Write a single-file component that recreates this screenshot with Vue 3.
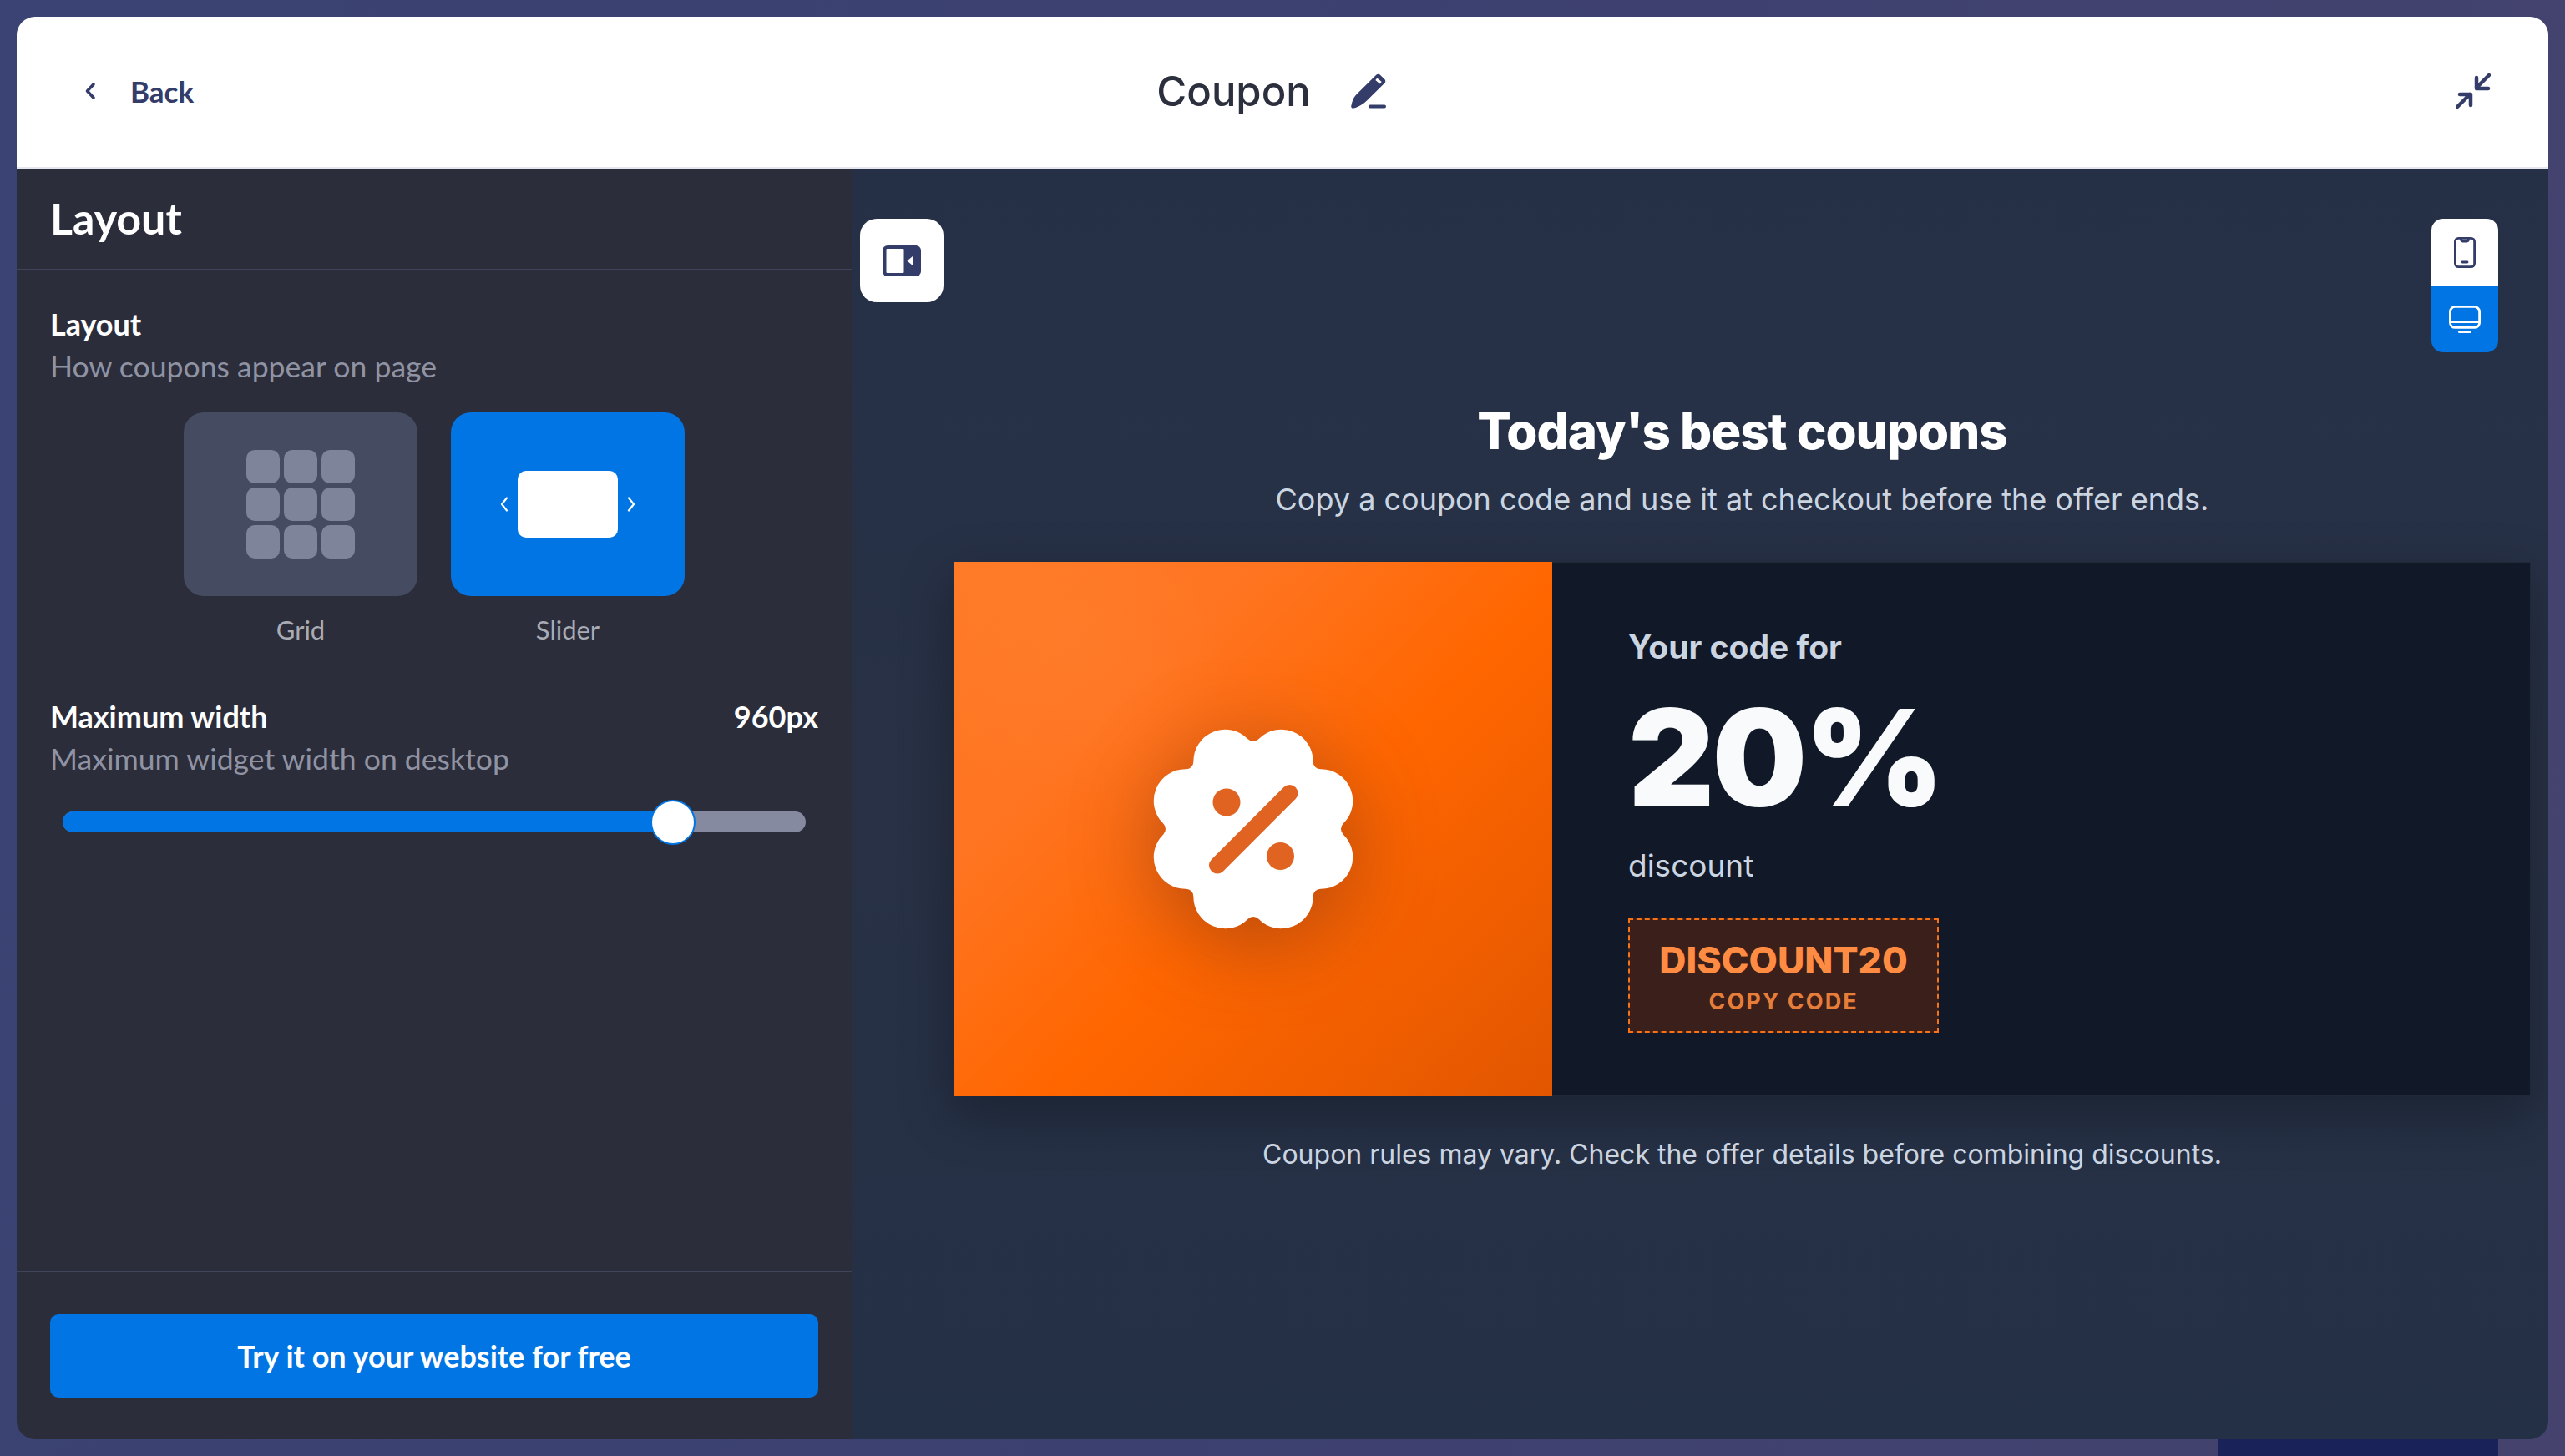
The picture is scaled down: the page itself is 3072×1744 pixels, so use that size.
<script setup>
const cells = Array.from({ length: 9 }, (_, i) => i)

const badgePath = (() => {
  const c = 120, lobeDist = 88, lobeR = 38, notch = 105, filletR = 8.9
  const pt = (r, deg) => {
    const a = (deg * Math.PI) / 180
    return [c + r * Math.cos(a), c + r * Math.sin(a)]
  }
  const f = (n) => n.toFixed(2)
  const t = lobeR / (lobeR + filletR)
  const toward = (lobe, fil) => [lobe[0] + (fil[0] - lobe[0]) * t, lobe[1] + (fil[1] - lobe[1]) * t]
  let d = ''
  for (let k = 0; k < 8; k++) {
    const lobe = pt(lobeDist, 45 * k + 22.5)
    const a = toward(lobe, pt(notch + filletR, 45 * k))
    const b = toward(lobe, pt(notch + filletR, 45 * (k + 1)))
    d += k === 0 ? `M${f(a[0])} ${f(a[1])}` : `A${filletR} ${filletR} 0 0 0 ${f(a[0])} ${f(a[1])}`
    d += `A${lobeR} ${lobeR} 0 0 1 ${f(b[0])} ${f(b[1])}`
  }
  const first = toward(pt(lobeDist, 22.5), pt(notch + filletR, 0))
  d += `A${filletR} ${filletR} 0 0 0 ${f(first[0])} ${f(first[1])}Z`
  return d
})()
</script>

<template>
  <div class="page">
    <div class="strip"></div>
    <div class="frame">
      <header class="topbar">
        <div class="back">
          <svg class="chev" viewBox="0 0 14 22" width="14" height="22">
            <path d="M11 3 3.500 11 11 19" fill="none" stroke="currentColor" stroke-width="3.600" stroke-linecap="round" stroke-linejoin="round" />
          </svg>
          <span>Back</span>
        </div>
        <div class="title-wrap">
          <span class="title">Coupon</span>
          <svg class="pencil" viewBox="0 0 42 42" width="42" height="42">
            <path d="M30.500 1.600c1.300-1.200 3-1.200 4.200 0l5.600 5.400c1.300 1.200 1.300 3.100 0 4.400L19 32.600c-3.700 3.600-9 7-13.500 8.400L3 41.600c-1.900.4-3.200-1-2.700-2.800l1.100-4.600c1-3.600 2.700-6.600 5-9z" fill="#343c6a" />
            <path d="M31.300 5.500 36.700 10l-2 2.500-5.400-4.500z" fill="#fff" />
            <rect x="21" y="37.500" width="21" height="4" rx="2" fill="#343c6a" />
          </svg>
        </div>
        <svg class="shrink" viewBox="0 0 42 42" width="42" height="42" fill="none" stroke="#343c6a" stroke-width="4.500" stroke-linecap="round" stroke-linejoin="round">
          <path d="M40 2 25 17M25 5v13h14" />
          <path d="M2 40l15-15M5 25h13v13" />
        </svg>
      </header>

      <div class="body">
        <aside class="sidebar">
          <div class="side-head">Layout</div>
          <div class="side-main">
            <div class="label">Layout</div>
            <div class="hint">How coupons appear on page</div>
            <div class="options">
              <div class="option">
                <div class="tile tile-grid">
                  <div class="cells">
                    <span v-for="c in cells" :key="c" class="cell"></span>
                  </div>
                </div>
                <span class="opt-label">Grid</span>
              </div>
              <div class="option">
                <div class="tile tile-slider">
                  <svg viewBox="0 0 10 18" width="10" height="18">
                    <path d="M8 1.500 2 9l6 7.500" fill="none" stroke="#fff" stroke-width="2.200" stroke-linecap="round" stroke-linejoin="round" />
                  </svg>
                  <span class="slide"></span>
                  <svg viewBox="0 0 10 18" width="10" height="18">
                    <path d="M2 1.500 8 9l-6 7.500" fill="none" stroke="#fff" stroke-width="2.200" stroke-linecap="round" stroke-linejoin="round" />
                  </svg>
                </div>
                <span class="opt-label">Slider</span>
              </div>
            </div>

            <div class="width-row">
              <span class="label">Maximum width</span>
              <span class="value">960px</span>
            </div>
            <div class="hint">Maximum widget width on desktop</div>
            <div class="track">
              <div class="fill"></div>
              <div class="thumb"></div>
            </div>
          </div>
          <div class="side-foot">
            <button class="cta">Try it on your website for free</button>
          </div>
        </aside>

        <main class="preview">
          <button class="float-btn">
            <svg viewBox="0 0 46 37" width="46" height="37">
              <rect width="46" height="37" rx="6" fill="#343c6a" />
              <rect x="4.500" y="4" width="21" height="29" rx="1" fill="#fff" />
              <path d="M36 13v11l-6.500-5.500z" fill="#fff" />
            </svg>
          </button>
          <div class="device">
            <div class="dev dev-phone">
              <svg viewBox="0 0 26 37" width="26" height="37" fill="none" stroke="#343c6a" stroke-width="2.800" stroke-linecap="round" stroke-linejoin="round">
                <rect x="1.400" y="1.400" width="23.200" height="34.200" rx="4" />
                <path d="M8.500 2c0 2 .6 3 2 3h5c1.400 0 2-1 2-3" />
                <path d="M10 30h6" />
              </svg>
            </div>
            <div class="dev dev-desk">
              <svg viewBox="0 0 38 33" width="38" height="33" fill="none" stroke="#fff" stroke-width="2.800" stroke-linecap="round" stroke-linejoin="round">
                <rect x="1.400" y="1.400" width="35.200" height="25" rx="6" />
                <path d="M1.800 19.500h34.400" />
                <path d="M12.500 31.500h13" stroke-width="3" />
              </svg>
            </div>
          </div>

          <h1 class="headline">Today's best coupons</h1>
          <p class="sub">Copy a coupon code and use it at checkout before the offer ends.</p>

          <section class="card">
            <div class="card-art">
              <svg class="badge" viewBox="0 0 240 240" width="240" height="240">
                <path :d="badgePath" fill="#fff" />
                <circle cx="88" cy="88" r="16.500" fill="#e06322" />
                <circle cx="152.500" cy="152.500" r="16.500" fill="#e06322" />
                <path d="M77 163.500 163.500 77" stroke="#e06322" stroke-width="20" stroke-linecap="round" />
              </svg>
            </div>
            <div class="card-info">
              <div class="code-for">Your code for</div>
              <div class="amount">20%</div>
              <div class="discount">discount</div>
              <div class="code-box">
                <span class="code">DISCOUNT20</span>
                <span class="copy">COPY CODE</span>
              </div>
            </div>
          </section>

          <p class="rules">Coupon rules may vary. Check the offer details before combining discounts.</p>
        </main>
      </div>
    </div>
  </div>
</template>

<style>
html, body { margin: 0; padding: 0; }
</style>

<style scoped>
* { box-sizing: border-box; }
.page {
  position: relative;
  width: 3072px;
  height: 1744px;
  padding: 20px;
  overflow: hidden;
  background: linear-gradient(100deg, #3a4373 0%, #3c4070 50%, #45436e 100%);
  font-family: Lato, "Noto Sans", sans-serif;
}
.strip {
  position: absolute;
  left: 2656px;
  bottom: 0;
  width: 336px;
  height: 20px;
  background: #1a2359;
}
.frame {
  position: relative;
  display: flex;
  flex-direction: column;
  height: 1704px;
  border-radius: 22px;
  overflow: hidden;
}
.topbar {
  display: flex;
  align-items: center;
  justify-content: space-between;
  flex: none;
  height: 182px;
  padding: 0 69px 2px 81px;
  background: #fff;
  border-bottom: 2px solid #e6e6f0;
  color: #343c6a;
}
.back {
  display: flex;
  align-items: center;
  gap: 41px;
  font-size: 35px;
  font-weight: 700;
}
.title-wrap {
  display: flex;
  align-items: center;
  gap: 48px;
  margin-left: -128px;
}
.title {
  font-family: Inter, sans-serif;
  font-size: 49px;
  font-weight: 500;
  color: #2c2f3e;
}
.body {
  display: flex;
  flex: 1;
  min-height: 0;
}
.sidebar {
  display: flex;
  flex-direction: column;
  flex: none;
  width: 1000px;
  background: #2b2d3b;
  color: #fff;
}
.side-head {
  flex: none;
  height: 122px;
  padding: 0 40px;
  border-bottom: 2px solid #40445a;
  font-size: 52px;
  font-weight: 700;
  line-height: 118px;
}
.side-main {
  flex: 1;
  padding: 38px 40px 0;
}
.label {
  font-size: 36px;
  font-weight: 700;
  line-height: 52px;
}
.hint {
  font-size: 35.600px;
  line-height: 50px;
  color: #8f93a3;
}
.options {
  display: flex;
  justify-content: center;
  gap: 40px;
  margin-top: 30px;
}
.option {
  display: flex;
  flex-direction: column;
  align-items: center;
  width: 280px;
}
.tile {
  display: flex;
  align-items: center;
  justify-content: center;
  width: 280px;
  height: 220px;
  border-radius: 24px;
}
.tile-grid { background: #454b60; }
.tile-slider {
  gap: 11px;
  background: #0075e3;
}
.cells {
  display: grid;
  grid-template-columns: repeat(3, 40px);
  grid-auto-rows: 40px;
  gap: 5px;
}
.cell {
  border-radius: 10px;
  background: #7e8499;
}
.slide {
  width: 120px;
  height: 80px;
  border-radius: 10px;
  background: #fff;
}
.opt-label {
  margin-top: 22px;
  font-size: 31px;
  line-height: 36px;
  color: #a9abb5;
}
.width-row {
  display: flex;
  align-items: center;
  justify-content: space-between;
  margin-top: 60px;
}
.value {
  font-size: 36px;
  font-weight: 700;
}
.track {
  position: relative;
  height: 25px;
  margin: 38px 15px 0;
  border-radius: 13px;
  background: #858aa0;
}
.fill {
  width: 82.1%;
  height: 100%;
  border-radius: 13px 0 0 13px;
  background: #0075e3;
}
.thumb {
  position: absolute;
  left: 82.1%;
  top: 50%;
  width: 54px;
  height: 54px;
  margin: -27px 0 0 -27px;
  border: 2px solid #0075e3;
  border-radius: 50%;
  background: #fff;
}
.side-foot {
  flex: none;
  height: 202px;
  padding: 50px 40px;
  border-top: 2px solid #40445a;
}
.cta {
  display: block;
  width: 100%;
  height: 100px;
  border: 0;
  border-radius: 10px;
  background: #0075e3;
  color: #fff;
  font-family: inherit;
  font-size: 36px;
  font-weight: 700;
}
.preview {
  position: relative;
  display: flex;
  flex-direction: column;
  align-items: center;
  flex: 1;
  min-width: 0;
  padding: 0 21px 0 122px;
  background: linear-gradient(180deg, #253047 0%, #283145 50%, #243046 100%);
  font-family: Inter, sans-serif;
}
.float-btn {
  position: absolute;
  left: 10px;
  top: 60px;
  display: flex;
  align-items: center;
  justify-content: center;
  width: 100px;
  height: 100px;
  padding: 0;
  border: 0;
  border-radius: 20px;
  background: #fff;
}
.device {
  position: absolute;
  right: 60px;
  top: 60px;
  width: 80px;
  border-radius: 14px;
  overflow: hidden;
}
.dev {
  display: flex;
  align-items: center;
  justify-content: center;
  height: 80px;
}
.dev-phone { background: #fff; }
.dev-desk { background: #0075e3; }
.headline {
  margin: 0;
  padding-top: 278px;
  font-size: 60px;
  font-weight: 800;
  line-height: 72px;
  letter-spacing: -1px;
  color: #fff;
}
.sub {
  margin: 22px 0 0;
  font-size: 36px;
  line-height: 48px;
  color: #cbd5e1;
}
.card {
  display: flex;
  flex: none;
  width: 100%;
  height: 640px;
  margin-top: 51px;
  box-shadow: 0 20px 60px rgba(0, 0, 0, 0.3);
}
.card-art {
  display: flex;
  align-items: center;
  justify-content: center;
  flex: none;
  width: 717px;
  background:
    radial-gradient(circle at 20% 15%, rgba(255, 150, 80, 0.14), transparent 24%),
    linear-gradient(135deg, #ff7a26 0%, #ff7420 28%, #ff6600 55%, #e25600 100%);
}
.badge {
  filter: drop-shadow(0 18px 50px rgba(90, 40, 30, 0.45));
}
.card-info {
  flex: 1;
  padding: 77px 0 0 91px;
  background: #111827;
  border: 1px solid #1f2937;
  border-left: 0;
}
.code-for {
  font-size: 39px;
  font-weight: 700;
  line-height: 48px;
  color: #cbd5e1;
}
.amount {
  margin-top: 26px;
  font-size: 160px;
  font-weight: 900;
  line-height: 164px;
  letter-spacing: -3px;
  color: #f8fafc;
}
.discount {
  margin-top: 24px;
  font-size: 37px;
  line-height: 48px;
  color: #cbd5e1;
}
.code-box {
  display: flex;
  flex-direction: column;
  align-items: center;
  width: 372px;
  height: 137px;
  margin-top: 39px;
  padding-top: 22px;
  border: 2px dashed #f97316;
  background: #3a1f1a;
}
.code {
  font-size: 44.500px;
  font-weight: 800;
  line-height: 52px;
  color: #ff8c42;
}
.copy {
  margin-top: 7px;
  font-size: 27px;
  font-weight: 700;
  line-height: 34px;
  letter-spacing: 2px;
  color: #e67e3a;
}
.rules {
  margin: 50px 0 0;
  font-size: 32px;
  line-height: 40px;
  color: #cbd5e1;
}
</style>
